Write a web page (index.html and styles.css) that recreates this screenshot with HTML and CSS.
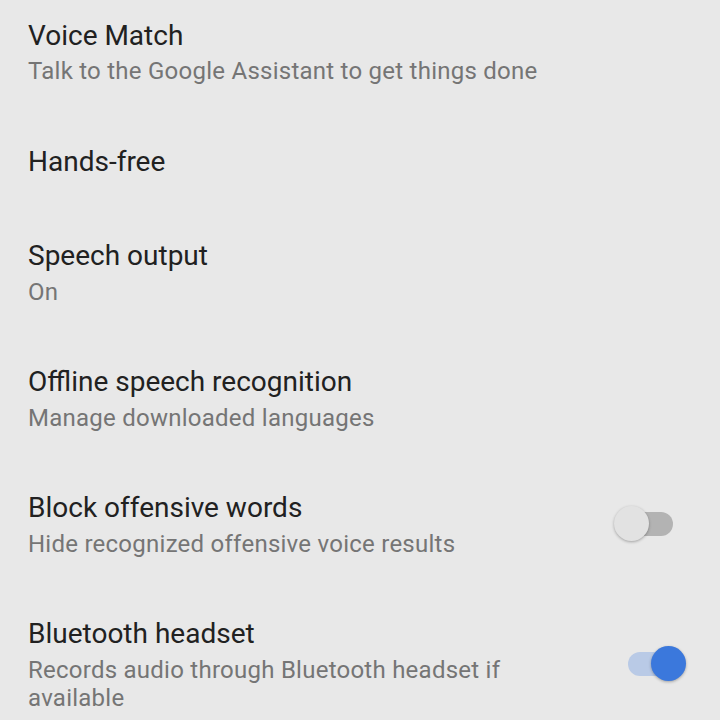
FILE: index.html
```html
<!DOCTYPE html>
<html>
<head>
<meta charset="utf-8">
<link rel="stylesheet" href="styles.css">
</head>
<body>
<div class="list">
  <div class="row">
    <div class="text">
      <div class="title">Voice Match</div>
      <div class="sub">Talk to the Google Assistant to get things done</div>
    </div>
  </div>
  <div class="row">
    <div class="text">
      <div class="title">Hands-free</div>
    </div>
  </div>
  <div class="row">
    <div class="text">
      <div class="title">Speech output</div>
      <div class="sub">On</div>
    </div>
  </div>
  <div class="row">
    <div class="text">
      <div class="title">Offline speech recognition</div>
      <div class="sub">Manage downloaded languages</div>
    </div>
  </div>
  <div class="row with-switch">
    <div class="text">
      <div class="title">Block offensive words</div>
      <div class="sub">Hide recognized offensive voice results</div>
    </div>
    <div class="switch off"><span class="thumb"></span></div>
  </div>
  <div class="row with-switch">
    <div class="text">
      <div class="title">Bluetooth headset</div>
      <div class="sub">Records audio through Bluetooth headset if available</div>
    </div>
    <div class="switch on"><span class="thumb"></span></div>
  </div>
</div>
</body>
</html>
```
FILE: styles.css
```css
html, body {
  margin: 0;
  padding: 0;
  background: #e8e8e8;
  height: 100%;
  overflow: hidden;
}
body {
  font-family: Roboto, "Noto Sans", sans-serif;
}
.list {
  margin-top: -11.75px;
  display: flex;
  flex-direction: column;
}
.row {
  display: flex;
  align-items: center;
  padding: 29.25px 0 29.25px 28px;
}
.text {
  flex: 1;
  min-width: 0;
}
.with-switch .text {
  padding-right: 70px;
}
.title {
  font-size: 28px;
  line-height: 36px;
  color: #212121;
}
.sub {
  margin-top: 3.5px;
  font-size: 24px;
  line-height: 28px;
  letter-spacing: 0.25px;
  color: #757575;
}
.switch {
  position: relative;
  width: 54px;
  height: 24px;
  border-radius: 12px;
  flex: none;
}
.switch.off {
  background: #b3b3b3;
  margin-right: 47px;
}
.switch.on {
  background: #b9cae6;
  margin-right: 38px;
}
.thumb {
  position: absolute;
  top: -5.5px;
  width: 35px;
  height: 35px;
  border-radius: 50%;
  box-shadow: 0 1px 3px rgba(0,0,0,0.3);
}
.switch.off .thumb {
  left: -5px;
  background: #e2e2e2;
}
.switch.on .thumb {
  right: -4px;
  background: #3b78dc;
}
```
